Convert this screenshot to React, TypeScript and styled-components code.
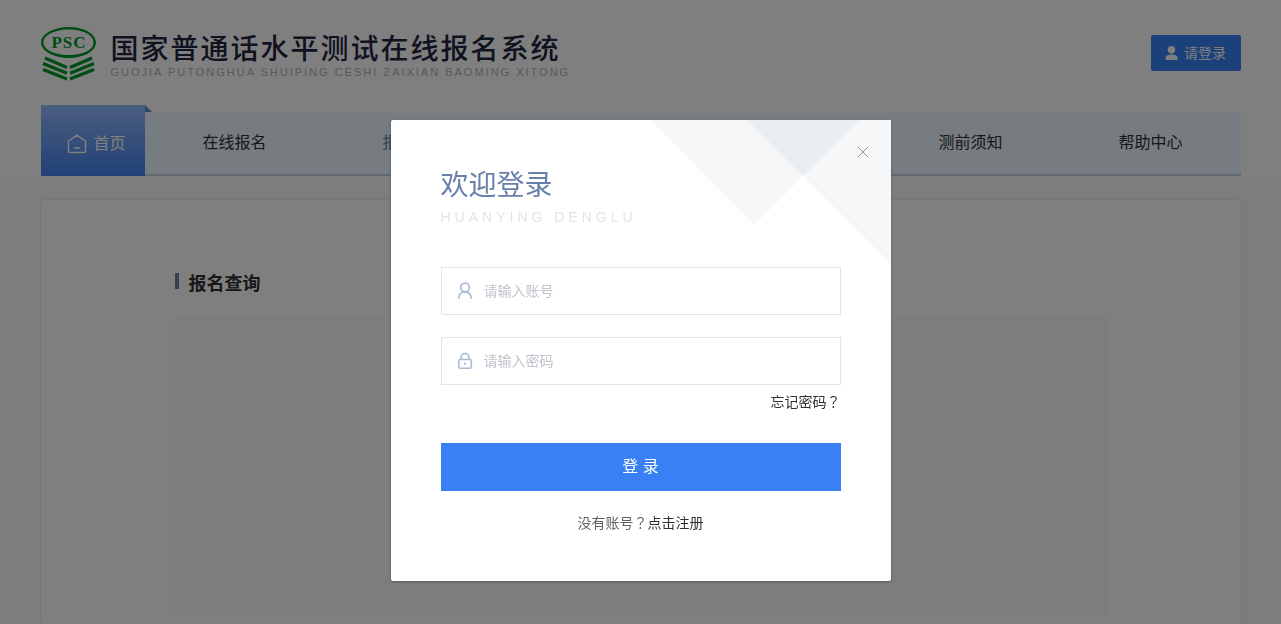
import React from 'react';
import styled, { createGlobalStyle } from 'styled-components';

const GlobalStyle = createGlobalStyle`
  * { box-sizing: border-box; }
  body {
    margin: 0;
    background: #fafafa;
    color: #303133;
    font-family: "Liberation Sans", "Noto Sans CJK SC", sans-serif;
    font-size: 14px;
    line-height: 20px;
  }
  a { color: inherit; text-decoration: none; }
  button, input { font: inherit; border: 0; margin: 0; padding: 0; }
  button { cursor: pointer; }
  h1, h2, p { margin: 0; font-weight: 400; }
`;

const Header = styled.header`
  background: #fff;
`;

const Container = styled.div`
  width: 100%;
  max-width: 1200px;
  margin: 0 auto;
`;

const Brand = styled(Container)`
  display: flex;
  align-items: center;
  justify-content: space-between;
  height: 105px;
`;

const Logo = styled.a`
  display: flex;
  align-items: center;
  gap: 14px;
  padding-top: 2px;
`;

const SiteTitle = styled.div`
  padding-top: 4px;
`;

const SiteName = styled.h1`
  color: #1f2640;
  font-size: 28px;
  font-weight: 500;
  line-height: 32px;
  letter-spacing: 2px;
  white-space: nowrap;
`;

const SitePinyin = styled.p`
  color: #b0b3ba;
  font-size: 11px;
  line-height: 12px;
  letter-spacing: 2px;
  white-space: nowrap;
`;

const UserButton = styled.button`
  display: flex;
  align-items: center;
  justify-content: center;
  gap: 6px;
  width: 90px;
  height: 36px;
  border-radius: 2px;
  background: #3880f3;
  color: #fff;
`;

const Nav = styled(Container).attrs({ as: 'nav' })`
  display: flex;
  align-items: flex-end;
  height: 71px;
`;

const HomeLink = styled.a`
  position: relative;
  display: flex;
  align-items: center;
  justify-content: center;
  gap: 6px;
  width: 104px;
  height: 71px;
  padding: 6px 0 0 8px;
  background: linear-gradient(#94bcfb, #4381ef);
  color: #fff;
  font-size: 16px;

  &::after {
    content: '';
    position: absolute;
    top: 0;
    left: 100%;
    border-left: 7px solid #5f8fdc;
    border-top: 7px solid transparent;
  }
`;

const NavList = styled.div`
  display: flex;
  flex: 1;
  height: 64px;
  border-bottom: 2px solid #c3cfe0;
  background: #edf8fe;
`;

const NavLink = styled.a<{ $active?: boolean }>`
  display: flex;
  flex: 1 1 auto;
  align-items: center;
  justify-content: center;
  color: ${(p) => (p.$active ? '#6880aa' : '#303133')};
  font-size: 16px;
`;

const Card = styled(Container).attrs({ as: 'main' })`
  min-height: calc(100vh - 200px);
  margin-top: 24px;
  padding: 73px 134px 0;
  border-radius: 4px 4px 0 0;
  background: #fff;
  box-shadow: 0 0 3px rgba(0, 0, 0, 0.12);
`;

const SectionTitle = styled.h2`
  display: flex;
  align-items: flex-start;
  gap: 10px;
  font-size: 18px;
  font-weight: 700;
  line-height: 22px;

  &::before {
    content: '';
    width: 4px;
    height: 16px;
    background: #6880aa;
  }
`;

const Panel = styled.div`
  height: 300px;
  margin-top: 21px;
  background: #fafafa;
`;

const Overlay = styled.div`
  position: fixed;
  inset: 0;
  display: flex;
  align-items: flex-start;
  justify-content: center;
  padding-top: 120px;
  background: rgba(0, 0, 0, 0.5);
`;

const Dialog = styled.section`
  position: relative;
  width: 500px;
  padding: 50px 50px 48px;
  border-radius: 2px;
  background: #fff;
  box-shadow: 0 1px 3px rgba(0, 0, 0, 0.3);
`;

const Decoration = styled.svg`
  position: absolute;
  top: 0;
  right: 0;
`;

const CloseButton = styled.button`
  position: absolute;
  top: 24px;
  right: 20px;
  display: flex;
  align-items: center;
  justify-content: center;
  width: 16px;
  height: 16px;
  background: none;
  color: #909399;
`;

const DialogTitle = styled.h2`
  color: #6880aa;
  font-size: 28px;
  line-height: 32px;
`;

const DialogPinyin = styled.p`
  margin-top: 5px;
  color: #e4e4e6;
  line-height: 20px;
  letter-spacing: 4px;
`;

const Form = styled.form`
  display: flex;
  flex-direction: column;
  gap: 22px;
  margin-top: 40px;
`;

const Field = styled.label`
  display: flex;
  align-items: center;
  gap: 11px;
  height: 48px;
  padding: 0 15px;
  border: 1px solid #e4e4e6;
  background: #fff;
  color: #a9bbd9;
`;

const TextInput = styled.input`
  flex: 1;
  min-width: 0;
  height: 46px;
  outline: 0;
  background: none;
  color: #303133;

  &::placeholder { color: #bfc3cc; opacity: 1; }
`;

const ForgotLink = styled.a`
  align-self: flex-end;
  margin: -15px 0 9px;
`;

const Mark = styled.span`
  font-family: "Noto Sans CJK TC", sans-serif;
  line-height: 1;
`;

const SubmitButton = styled.button`
  height: 48px;
  background: #3880f3;
  color: #fff;
  font-size: 16px;
`;

const Register = styled.p`
  margin-top: 22px;
  color: #606266;
  text-align: center;

  a { color: #303133; }
`;

const LogoMark = () => (
  <svg width="56" height="54" viewBox="0 0 56 54" aria-hidden="true">
    <path fill="#009a28" fillRule="evenodd" d="M28 0C43 0 55 7 55 15.500S43 31 28 31 0 24 0 15.500 13 0 28 0ZM28 2.500C14 2.500 2.500 8 2.500 15.500S14 28 28 28s24.500-5 24.500-12.500S42 2.500 28 2.500Z" />
    <text x="28" y="21" textAnchor="middle" fill="#009a28" fontFamily="Liberation Serif, serif" fontWeight="700" fontSize="17" letterSpacing="1">PSC</text>
    <g fill="none" stroke="#009a28" strokeWidth="3.200">
      <path d="M4 31 26 40.500M2 36.500 26 46.200M2 42.500 26 52" />
      <path d="M51 31 29 40.500M53 36.500 29 46.200M53 42.500 29 52" />
    </g>
  </svg>
);

const App = () => (
  <>
    <GlobalStyle />
    <Header>
      <Brand>
        <Logo href="#">
          <LogoMark />
          <SiteTitle>
            <SiteName>国家普通话水平测试在线报名系统</SiteName>
            <SitePinyin>GUOJIA PUTONGHUA SHUIPING CESHI ZAIXIAN BAOMING XITONG</SitePinyin>
          </SiteTitle>
        </Logo>
        <UserButton type="button">
          <svg width="13" height="14" viewBox="0 0 13 14" fill="currentColor" aria-hidden="true">
            <circle cx="6.500" cy="3.700" r="3.700" />
            <path d="M.5 14v-1.500C.5 9.800 2.800 8.500 6.500 8.500s6 1.300 6 4V14Z" />
          </svg>
          请登录
        </UserButton>
      </Brand>
      <Nav>
        <HomeLink href="#">
          <svg width="20" height="20" viewBox="0 0 20 20" fill="none" stroke="currentColor" strokeWidth="1.500" strokeLinejoin="round" strokeLinecap="round" aria-hidden="true">
            <path d="M1.500 7 10 1.200l8.500 5.800V17a1.500 1.500 0 0 1-1.500 1.500H3A1.500 1.500 0 0 1 1.500 17ZM7.500 14h5" />
          </svg>
          首页
        </HomeLink>
        <NavList>
          <NavLink href="#">在线报名</NavLink>
          <NavLink href="#" $active>报名查询</NavLink>
          <NavLink href="#">成绩查询</NavLink>
          <NavLink href="#">测试站查询</NavLink>
          <NavLink href="#">测前须知</NavLink>
          <NavLink href="#">帮助中心</NavLink>
        </NavList>
      </Nav>
    </Header>
    <Card>
      <SectionTitle>报名查询</SectionTitle>
      <Panel />
    </Card>
    <Overlay>
      <Dialog role="dialog" aria-modal="true" aria-labelledby="login-title">
        <Decoration width="241" height="144" viewBox="0 0 241 144" aria-hidden="true">
          <path fill="#f5f7f9" d="M0 0H209L104 105Z" />
          <path fill="#f5f7f8" d="M97 0H241V144Z" />
          <path fill="#eaedf2" d="M97 0H209L153 56Z" />
        </Decoration>
        <CloseButton type="button" aria-label="关闭">
          <svg width="12" height="12" viewBox="0 0 12 12" fill="none" stroke="currentColor" aria-hidden="true">
            <path d="m1 1 10 10M11 1 1 11" />
          </svg>
        </CloseButton>
        <DialogTitle id="login-title">欢迎登录</DialogTitle>
        <DialogPinyin>HUANYING DENGLU</DialogPinyin>
        <Form onSubmit={(e) => e.preventDefault()}>
          <Field>
            <svg width="16" height="18" viewBox="0 0 16 18" fill="none" stroke="currentColor" strokeWidth="1.700" strokeLinecap="round" aria-hidden="true">
              <circle cx="8" cy="5.500" r="4.300" />
              <path d="M1.700 16.200c0-3.800 2.500-6.400 6.300-6.400s6.300 2.600 6.300 6.400" />
            </svg>
            <TextInput type="text" placeholder="请输入账号" aria-label="账号" />
          </Field>
          <Field>
            <svg width="16" height="18" viewBox="0 0 16 18" fill="none" stroke="currentColor" strokeWidth="1.600" aria-hidden="true">
              <rect x="1.800" y="7.500" width="12.500" height="8.700" rx="1.500" />
              <path d="M4 7.500V5.500a4 4 0 0 1 8 0v2M8 10.500v2.500" />
            </svg>
            <TextInput type="password" placeholder="请输入密码" aria-label="密码" />
          </Field>
          <ForgotLink href="#">忘记密码<Mark lang="zh-TW">？</Mark></ForgotLink>
          <SubmitButton type="submit">登 录</SubmitButton>
        </Form>
        <Register>
          没有账号<Mark lang="zh-TW">？</Mark><a href="#">点击注册</a>
        </Register>
      </Dialog>
    </Overlay>
  </>
);

export default App;
